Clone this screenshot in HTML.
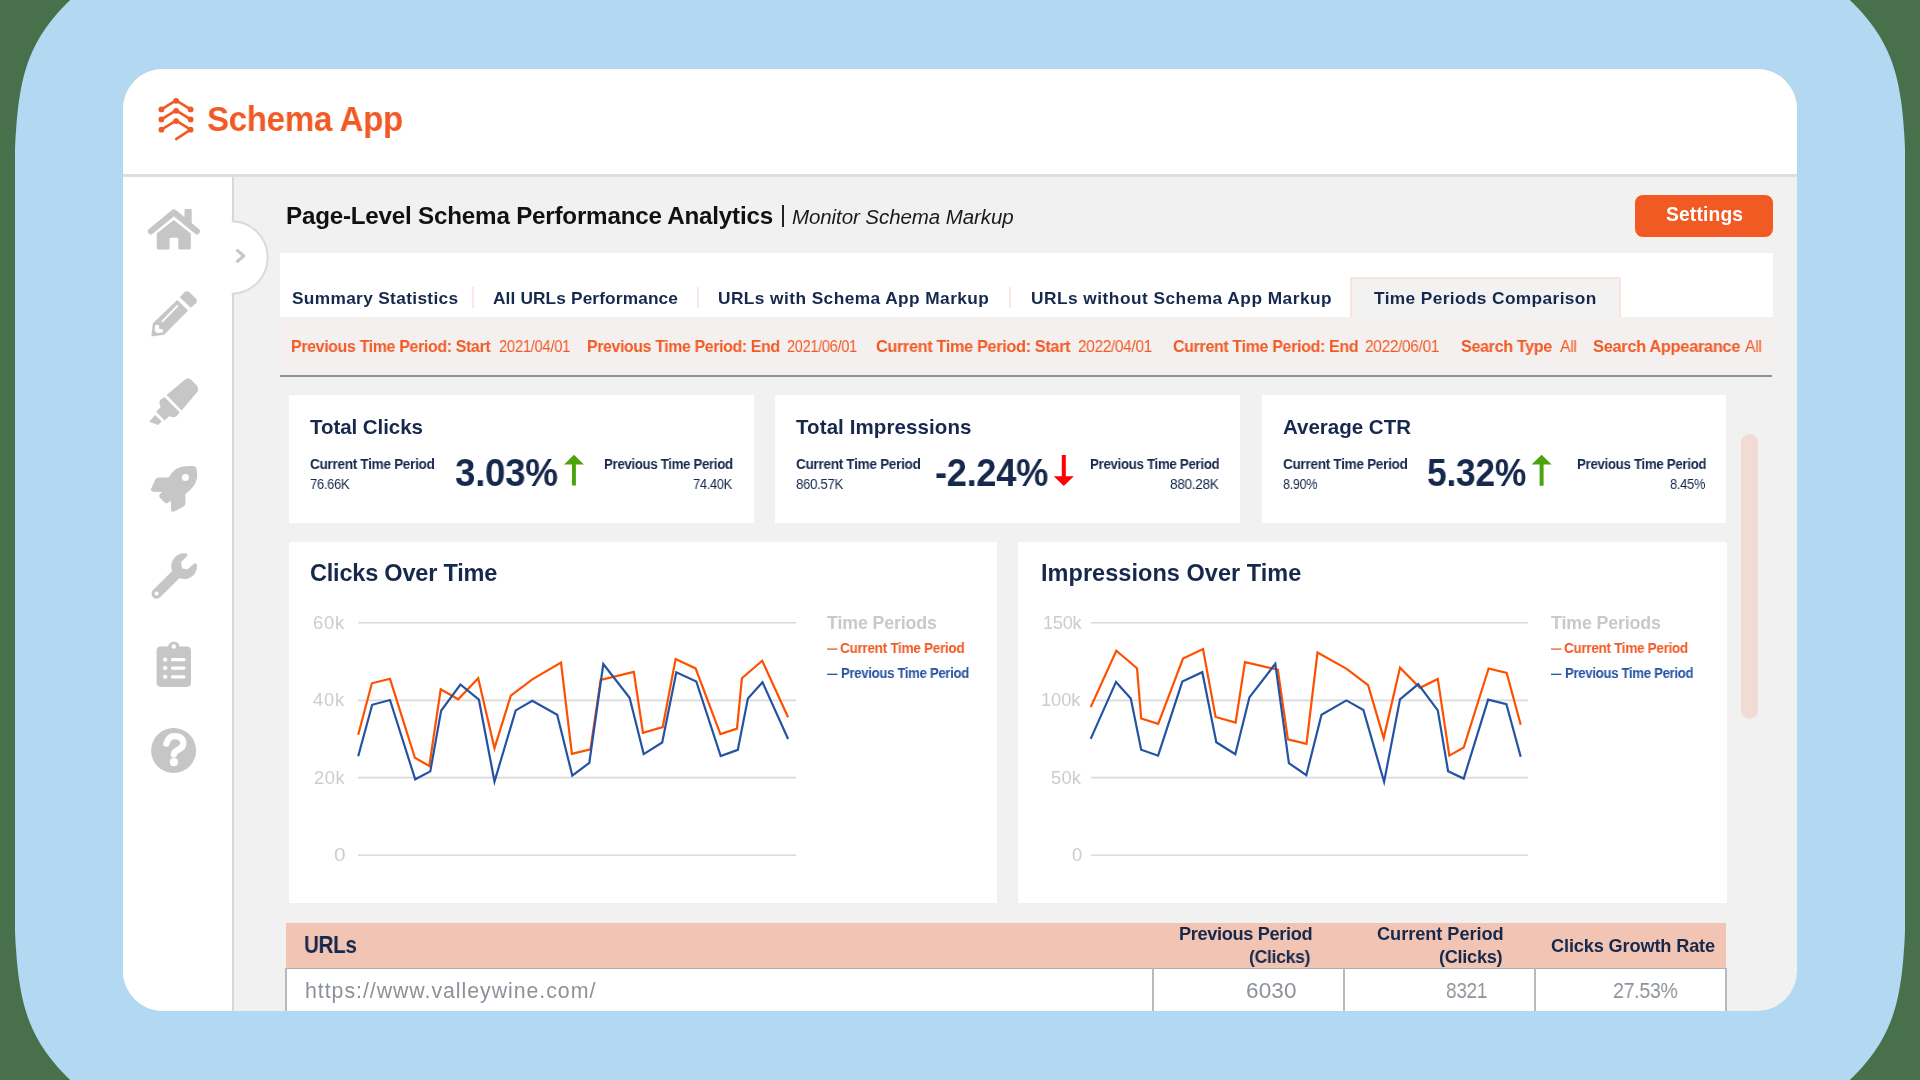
<!DOCTYPE html>
<html><head><meta charset="utf-8"><title>Schema App - Time Periods Comparison</title>
<style>
html,body{margin:0;padding:0;}
body{width:1920px;height:1080px;position:relative;overflow:hidden;background:#48704b;font-family:"Liberation Sans",sans-serif;}
.b{position:absolute;box-sizing:border-box;}
.t{position:absolute;white-space:nowrap;line-height:1;transform-origin:0 0;will-change:transform;}
.ov{position:absolute;left:0;top:0;}
</style></head><body>
<svg class="ov" width="1920" height="1080"><path fill="#b2d8f2" d="M70.2,0 L66.1,4 L62.2,8 L58.5,12 L55.1,16 L51.8,20 L48.7,24 L45.8,28 L43.1,32 L40.5,36 L38.2,40 L36.0,44 L34.0,48 L32.1,52 L30.4,56 L28.8,60 L27.4,64 L26.1,68 L24.9,72 L23.8,76 L22.8,80 L21.9,84 L21.1,88 L20.4,92 L19.7,96 L19.1,100 L18.5,104 L18.0,108 L17.6,112 L17.2,116 L16.8,120 L16.5,124 L16.2,128 L15.9,132 L15.6,136 L15.4,140 L15.2,144 L15.0,148 L15.0,152 L15.0,156 L15.0,160 L15.0,920 L15.0,924 L15.0,928 L15.0,932 L15.2,936 L15.4,940 L15.6,944 L15.9,948 L16.2,952 L16.5,956 L16.8,960 L17.2,964 L17.6,968 L18.0,972 L18.5,976 L19.1,980 L19.7,984 L20.4,988 L21.1,992 L21.9,996 L22.8,1000 L23.8,1004 L24.9,1008 L26.1,1012 L27.4,1016 L28.8,1020 L30.4,1024 L32.1,1028 L34.0,1032 L36.0,1036 L38.2,1040 L40.5,1044 L43.1,1048 L45.8,1052 L48.7,1056 L51.8,1060 L55.1,1064 L58.5,1068 L62.2,1072 L66.1,1076 L70.2,1080 L1849.8,1080 L1853.9,1076 L1857.8,1072 L1861.5,1068 L1864.9,1064 L1868.2,1060 L1871.3,1056 L1874.2,1052 L1876.9,1048 L1879.5,1044 L1881.8,1040 L1884.0,1036 L1886.0,1032 L1887.9,1028 L1889.6,1024 L1891.2,1020 L1892.6,1016 L1893.9,1012 L1895.1,1008 L1896.2,1004 L1897.2,1000 L1898.1,996 L1898.9,992 L1899.6,988 L1900.3,984 L1900.9,980 L1901.5,976 L1902.0,972 L1902.4,968 L1902.8,964 L1903.2,960 L1903.5,956 L1903.8,952 L1904.1,948 L1904.4,944 L1904.6,940 L1904.8,936 L1905.0,932 L1905.0,928 L1905.0,924 L1905.0,920 L1905.0,160 L1905.0,156 L1905.0,152 L1905.0,148 L1904.8,144 L1904.6,140 L1904.4,136 L1904.1,132 L1903.8,128 L1903.5,124 L1903.2,120 L1902.8,116 L1902.4,112 L1902.0,108 L1901.5,104 L1900.9,100 L1900.3,96 L1899.6,92 L1898.9,88 L1898.1,84 L1897.2,80 L1896.2,76 L1895.1,72 L1893.9,68 L1892.6,64 L1891.2,60 L1889.6,56 L1887.9,52 L1886.0,48 L1884.0,44 L1881.8,40 L1879.5,36 L1876.9,32 L1874.2,28 L1871.3,24 L1868.2,20 L1864.9,16 L1861.5,12 L1857.8,8 L1853.9,4 L1849.8,0 Z"/></svg>
<div class="b" style="left:123px;top:69px;width:1674px;height:942px;border-radius:40px;background:#f1f1f1;overflow:hidden">
  <div class="b" style="left:0;top:0;width:1674px;height:105px;background:#fff;border-bottom:3px solid #dcdee0;height:108px"></div>
  <div class="b" style="left:0;top:108px;width:110.5px;height:834px;background:#fff;border-right:2.5px solid #d5d7db"></div>
</div>
<!-- title bar -->
<div class="b" style="left:782px;top:205px;width:2px;height:21.5px;background:#222"></div>
<div class="b" style="left:1635px;top:195px;width:138px;height:41.5px;border-radius:8px;background:#f15a22"></div>
<!-- tabs -->
<div class="b" style="left:280px;top:253px;width:1493px;height:64px;background:#fff"></div>
<div class="b" style="left:1350px;top:277px;width:271px;height:41px;background:#f2f2f2;border:2px solid #f8e5de;border-bottom:none"></div>
<div class="b" style="left:472.2px;top:287px;width:2px;height:21px;background:#fbe8e2"></div>
<div class="b" style="left:696.7px;top:287px;width:2px;height:21px;background:#fbe8e2"></div>
<div class="b" style="left:1009.2px;top:287px;width:2px;height:21px;background:#fbe8e2"></div>
<div class="b" style="left:280px;top:317px;width:1493px;height:58px;background:#f5f0f0"></div>
<div class="b" style="left:280px;top:375px;width:1492px;height:2px;background:#8c939b"></div>
<!-- kpi cards -->
<div class="b" style="left:289px;top:395px;width:465px;height:127.5px;background:#fff"></div>
<div class="b" style="left:775.2px;top:395px;width:464.8px;height:127.5px;background:#fff"></div>
<div class="b" style="left:1262px;top:395px;width:464px;height:127.5px;background:#fff"></div>
<div class="b" style="left:1741px;top:434px;width:17px;height:285px;border-radius:8.5px;background:#f2dbd4"></div>
<!-- charts -->
<div class="b" style="left:288.5px;top:542px;width:708.5px;height:361px;background:#fff"></div>
<div class="b" style="left:1017.5px;top:542px;width:709px;height:361px;background:#fff"></div>
<!-- table -->
<div class="b" style="left:285.5px;top:923px;width:1440.5px;height:45px;background:#f2c4b4"></div>
<div class="b" style="left:285.5px;top:968px;width:1440.5px;height:43px;background:#fff;border-top:1.5px solid #a9aeb3"></div>
<div class="b" style="left:285.2px;top:968px;width:1.7px;height:43px;background:#b6babe"></div>
<div class="b" style="left:1152px;top:968px;width:1.8px;height:43px;background:#b6babe"></div>
<div class="b" style="left:1343px;top:968px;width:1.8px;height:43px;background:#b6babe"></div>
<div class="b" style="left:1534px;top:968px;width:1.8px;height:43px;background:#b6babe"></div>
<div class="b" style="left:1725px;top:968px;width:1.8px;height:43px;background:#b6babe"></div>
<svg class="ov" width="1920" height="1080" viewBox="0 0 1920 1080">
<g stroke="#dadada" stroke-width="1.6"><line x1="358" x2="796" y1="622.8" y2="622.8"/><line x1="1091" x2="1528" y1="622.8" y2="622.8"/><line x1="358" x2="796" y1="700.4" y2="700.4"/><line x1="1091" x2="1528" y1="700.4" y2="700.4"/><line x1="358" x2="796" y1="777.6" y2="777.6"/><line x1="1091" x2="1528" y1="777.6" y2="777.6"/><line x1="358" x2="796" y1="855.2" y2="855.2"/><line x1="1091" x2="1528" y1="855.2" y2="855.2"/></g>
<g fill="none" stroke-width="2.2" stroke-linejoin="miter" stroke-miterlimit="10">
<polyline stroke="#ff5000" points="358.2,734.8 371.9,683.3 390,678.8 414.9,757.8 429.3,766 440.7,689.3 458.2,699.3 478.2,678.2 494.5,748.2 510.8,695.6 532.3,679.3 561,662.6 571.9,753.8 590.4,749.3 600.7,680 633.8,671.9 643,732.9 662.7,727.1 675.6,659 695.6,668.4 720.4,734.1 737,728.6 741.9,678.2 762.2,660.7 788.1,717.3"/><polyline stroke="#2553a3" points="358.2,756.3 372.2,704.8 390,700 415.2,779.3 430.3,771.4 441.1,710.8 460.4,684.5 478.9,699.7 494.5,781.5 515.7,710.4 532.3,700.8 557.2,714.8 572.3,775.6 589.3,763 603.3,664 629.6,697.8 643.7,754.1 662.2,742.5 676.3,672.3 696.3,681.5 720.7,756 737.8,749.9 747.9,698.5 762.5,682.2 788.1,739"/>
<polyline stroke="#ff5000" points="1090.7,707.1 1116.3,650.7 1137,668.2 1141.2,718.5 1158.2,723.8 1183,658.5 1203,649 1215.6,717 1235.6,722.6 1245,662.2 1277.8,669.7 1287.9,739.4 1306.5,743.8 1317.5,652.5 1346.7,668.8 1368.1,685.1 1383.7,738.1 1400,667.8 1420,687.8 1437.8,678.9 1449.3,755.6 1463.7,747.5 1488.6,668.5 1506.7,673 1520.7,724.8"/><polyline stroke="#2553a3" points="1090.7,738.9 1116,681.9 1130.8,698.5 1141.2,749.7 1158.1,755.7 1182.3,681.6 1202.3,672.2 1216.3,742.3 1235.3,754.2 1249.4,697.4 1275.3,663.8 1288.9,763.1 1306.3,775.2 1321.5,714.7 1346.4,700.4 1363.4,710 1384.1,781.9 1400,699.3 1418.2,684.1 1437.8,710.4 1448.1,771.2 1463.7,778.6 1488.1,699.6 1506.4,704.1 1520.7,756.7"/>
</g>
<!-- logo icon -->
<g stroke="#f15a24" stroke-width="2.6" fill="none" stroke-linejoin="round">
<polyline points="161.4,109.4 176.1,100.3 190.6,109.4"/>
<polyline points="161.4,119.4 176.1,110.3 190.6,119.4"/>
<polyline points="161.4,129.7 176.1,120.6 190.6,129.7 175.3,139.7"/>
</g>
<g fill="#f15a24">
<circle cx="161.4" cy="109.4" r="2.9"/><circle cx="190.6" cy="109.4" r="2.9"/><circle cx="176.1" cy="100.8" r="2.9"/>
<circle cx="161.4" cy="119.4" r="2.9"/><circle cx="190.6" cy="119.4" r="2.9"/><circle cx="176.1" cy="110.8" r="2.9"/>
<circle cx="161.4" cy="129.7" r="2.9"/><circle cx="190.6" cy="129.7" r="2.9"/><circle cx="176.1" cy="121.1" r="2.9"/>
</g>
<g stroke-width="1.3"><line x1="827.1" x2="837.5" y1="649.1" y2="649.1" stroke="#f15a24"/><line x1="827.1" x2="837.5" y1="674.3" y2="674.3" stroke="#2553a2"/>
<line x1="1551" x2="1561.4" y1="649.1" y2="649.1" stroke="#f15a24"/><line x1="1551" x2="1561.4" y1="674.3" y2="674.3" stroke="#2553a2"/></g>
<!-- arrows -->
<path fill="#4ca30d" d="M574,454.8 L583.9,464.6 L575.9,464.6 L575.9,485.6 L572,485.6 L572,464.6 L564.1,464.6Z"/>
<path fill="#4ca30d" d="M1541.6,454.8 L1551.6,464.6 L1543.6,464.6 L1543.6,485.8 L1539.6,485.8 L1539.6,464.6 L1531.6,464.6Z"/>
<path fill="#fd0202" d="M1063.8,486 L1073.8,476.2 L1065.8,476.2 L1065.8,455 L1061.8,455 L1061.8,476.2 L1053.8,476.2Z"/>
<!-- sidebar icons -->
<g fill="#c6c6c6">
 <g transform="translate(144,204)">
  <path d="M6.8,27.4 L29.9,8.4 L53,27.4" fill="none" stroke="#c6c6c6" stroke-width="6" stroke-linecap="round" stroke-linejoin="round"/>
  <rect x="40.5" y="5.1" width="7.2" height="16" rx="1"/>
  <path d="M29.9,16 L12.7,29.6 L12.7,44.3 Q12.7,45.6 14.1,45.6 L24.1,45.6 Q25.5,45.6 25.5,44.2 L25.5,35.2 Q25.5,33.8 26.9,33.8 L32.9,33.8 Q34.3,33.8 34.3,35.2 L34.3,44.2 Q34.3,45.6 35.7,45.6 L45.4,45.6 Q46.8,45.6 46.8,44.2 L46.8,29.6 Z"/>
 </g>
 <g transform="translate(144,286)">
  <path d="M35.8,11.2 L40.5,6.3 Q43,4 45.5,6.3 L51.8,12.6 Q54,15 51.8,17.4 L46.7,21.8 Z"/>
  <path fill-rule="evenodd" d="M33.2,14 L44.1,24.6 L20.2,48.8 L7.3,50.6 L8.8,37.3 Z M32.7,20.5 L18.9,34.8 M11.2,38.9 L15,38.9 L15,42.8 L18.9,43.3 L18.9,46.2 L13.2,47.2 L10.6,44.6 Z"/>
  <path d="M33.3,20 L18.4,35.3" stroke="#fff" stroke-width="1.8" stroke-linecap="round"/>
 </g>
 <g transform="translate(144,372)">
  <path d="M22.6,23.1 L40.8,7.8 Q43.6,5.6 46.7,7.3 L53,13.8 Q55,17 53.6,19.5 L37.6,38.4 Z"/>
  <path d="M20.4,25 L35.7,40.3 L32.2,44.6 Q29,46.3 25.5,44 L20.7,48.6 L12.1,39.7 L16.6,35.2 Q14.6,30 16.1,27.9 Z"/>
  <path d="M11.3,43 L17.7,49.4 L14.2,52.9 L5.1,49.7 Z"/>
 </g>
 <g transform="translate(144,460)">
  <path fill-rule="evenodd" d="M24.7,17.5 Q30,8 37.6,6.7 Q44,5.8 49.9,6.2 Q52.4,6.4 52.6,8.8 Q53.5,16 52.9,18 Q52,26 41.4,34.1 L41.4,43.5 Q41,46 38.7,47 L30.1,51.6 Q27.3,52.3 27.1,49.8 L26.9,40.8 L23.6,43 Q21.8,44 20.9,42.7 L16.1,38.1 Q14.6,35.6 15.6,34.4 L18,32 L8.6,31.7 Q6.3,31 7,29 L11.5,19.3 Q12.6,17.6 14.5,17.5 Z M44.9,17.5 A3.5,3.5 0 1 0 37.9,17.5 A3.5,3.5 0 1 0 44.9,17.5 Z"/>
 </g>
 <g transform="translate(144,548)">
  <path d="M12.6,45.6 L32,26.4" stroke="#c6c6c6" stroke-width="10.2" stroke-linecap="round"/>
  <path fill-rule="evenodd" d="M43,5.6 A12.9,12.9 0 1 0 52.9,16.5 L50.8,15 L43.8,21.2 L38.1,20.4 L37,14.2 L43.6,7.5 Z"/>
  <circle cx="12.6" cy="45.6" r="2.1" fill="#fff"/>
 </g>
 <g transform="translate(144,634)">
  <path fill-rule="evenodd" d="M16.9,12.6 L24,12.6 A5.9,5.9 0 0 1 35.6,12.6 L42.7,12.6 Q47,12.6 47,16.9 L47,48.6 Q47,52.9 42.7,52.9 L16.9,52.9 Q12.6,52.9 12.6,48.6 L12.6,16.9 Q12.6,12.6 16.9,12.6 Z M32.05,12.6 A2.25,2.25 0 1 0 27.55,12.6 A2.25,2.25 0 1 0 32.05,12.6 Z"/>
  <g fill="#fff"><circle cx="21.2" cy="25.7" r="2.15"/><circle cx="21.2" cy="34.1" r="2.15"/><circle cx="21.2" cy="42.8" r="2.15"/></g>
  <g stroke="#fff" stroke-width="3.2" stroke-linecap="round"><line x1="28.4" x2="39.9" y1="25.7" y2="25.7"/><line x1="28.4" x2="39.9" y1="34.1" y2="34.1"/><line x1="28.4" x2="39.9" y1="42.8" y2="42.8"/></g>
 </g>
 <circle cx="173.6" cy="750.5" r="22.5"/>
 <path d="M166.3,743.6 Q169,736.2 174.2,736.2 Q183.3,736.4 183.3,743.4 Q183.3,747.2 178.4,749.6 Q173.8,751.8 173.8,754.6" fill="none" stroke="#fff" stroke-width="6.3" stroke-linecap="round" stroke-linejoin="round"/>
 <circle cx="173.9" cy="762.2" r="4.1" fill="#fff"/>
</g>
<!-- toggle -->
<path d="M230.6,221.3 A36.2,36.2 0 0 1 230.6,293.7 Z" fill="#fff" stroke="none"/><path d="M231.5,221.3 A36.2,36.2 0 0 1 231.5,293.7" fill="none" stroke="#d8dbde" stroke-width="2"/>
<polyline points="237.6,250.6 243.8,255.9 237.6,261.2" fill="none" stroke="#c6c6c6" stroke-width="3.2" stroke-linecap="round" stroke-linejoin="round"/>
</svg>
<div class="t" style="left:207.18px;top:101.80px;font-size:35.8px;color:#f15a24;font-weight:bold;letter-spacing:-0.350px;transform:scaleX(0.9237);">Schema App</div>
<div class="t" style="left:285.90px;top:204.01px;font-size:24.2px;color:#111111;font-weight:bold;letter-spacing:-0.211px;">Page-Level Schema Performance Analytics</div>
<div class="t" style="left:791.80px;top:207.15px;font-size:20.5px;color:#1a1a1a;font-style:italic;letter-spacing:-0.085px;">Monitor Schema Markup</div>
<div class="t" style="left:1665.90px;top:205.16px;font-size:19.3px;color:#ffffff;font-weight:bold;letter-spacing:0.137px;">Settings</div>
<div class="t" style="left:291.80px;top:289.96px;font-size:17.3px;color:#16294d;font-weight:bold;letter-spacing:0.336px;">Summary Statistics</div>
<div class="t" style="left:492.50px;top:289.96px;font-size:17.3px;color:#16294d;font-weight:bold;letter-spacing:0.129px;">All URLs Performance</div>
<div class="t" style="left:718.30px;top:289.96px;font-size:17.3px;color:#16294d;font-weight:bold;letter-spacing:0.436px;">URLs with Schema App Markup</div>
<div class="t" style="left:1031.00px;top:289.96px;font-size:17.3px;color:#16294d;font-weight:bold;letter-spacing:0.489px;">URLs without Schema App Markup</div>
<div class="t" style="left:1374.00px;top:289.96px;font-size:17.3px;color:#16294d;font-weight:bold;letter-spacing:0.388px;">Time Periods Comparison</div>
<div class="t" style="left:291.34px;top:338.13px;font-size:16.5px;color:#f15a24;font-weight:bold;letter-spacing:-0.350px;transform:scaleX(0.9646);">Previous Time Period: Start</div>
<div class="t" style="left:499.00px;top:338.13px;font-size:16.5px;color:#f15a24;letter-spacing:-0.350px;transform:scaleX(0.8984);">2021/04/01</div>
<div class="t" style="left:587.24px;top:338.13px;font-size:16.5px;color:#f15a24;font-weight:bold;letter-spacing:-0.350px;transform:scaleX(0.9589);">Previous Time Period: End</div>
<div class="t" style="left:787.00px;top:338.13px;font-size:16.5px;color:#f15a24;letter-spacing:-0.350px;transform:scaleX(0.8832);">2021/06/01</div>
<div class="t" style="left:876.00px;top:338.13px;font-size:16.5px;color:#f15a24;font-weight:bold;letter-spacing:-0.350px;transform:scaleX(0.9861);">Current Time Period: Start</div>
<div class="t" style="left:1078.00px;top:338.13px;font-size:16.5px;color:#f15a24;letter-spacing:-0.350px;transform:scaleX(0.9337);">2022/04/01</div>
<div class="t" style="left:1173.00px;top:338.13px;font-size:16.5px;color:#f15a24;font-weight:bold;letter-spacing:-0.350px;transform:scaleX(0.9689);">Current Time Period: End</div>
<div class="t" style="left:1365.40px;top:338.13px;font-size:16.5px;color:#f15a24;letter-spacing:-0.350px;transform:scaleX(0.9362);">2022/06/01</div>
<div class="t" style="left:1461.00px;top:338.13px;font-size:16.5px;color:#f15a24;font-weight:bold;letter-spacing:-0.350px;transform:scaleX(0.9761);">Search Type</div>
<div class="t" style="left:1559.60px;top:338.13px;font-size:16.5px;color:#f15a24;letter-spacing:-0.350px;transform:scaleX(0.9546);">All</div>
<div class="t" style="left:1593.00px;top:338.13px;font-size:16.5px;color:#f15a24;font-weight:bold;letter-spacing:-0.350px;transform:scaleX(0.9966);">Search Appearance</div>
<div class="t" style="left:1744.60px;top:338.13px;font-size:16.5px;color:#f15a24;letter-spacing:-0.350px;transform:scaleX(0.9546);">All</div>
<div class="t" style="left:310.00px;top:417.00px;font-size:20.5px;color:#16294d;font-weight:bold;letter-spacing:-0.058px;">Total Clicks</div>
<div class="t" style="left:310.00px;top:457.40px;font-size:14.3px;color:#16294d;font-weight:bold;letter-spacing:-0.350px;transform:scaleX(0.9536);">Current Time Period</div>
<div class="t" style="left:310.00px;top:477.46px;font-size:14.1px;color:#16294d;letter-spacing:-0.350px;transform:scaleX(0.9237);">76.66K</div>
<div class="t" style="left:454.90px;top:454.44px;font-size:38.7px;color:#16294d;font-weight:bold;letter-spacing:-0.350px;transform:scaleX(0.9500);">3.03%</div>
<div class="t" style="left:604.20px;top:457.40px;font-size:14.3px;color:#16294d;font-weight:bold;letter-spacing:-0.350px;transform:scaleX(0.9267);">Previous Time Period</div>
<div class="t" style="left:692.80px;top:477.46px;font-size:14.1px;color:#16294d;letter-spacing:-0.350px;transform:scaleX(0.9145);">74.40K</div>
<div class="t" style="left:796.00px;top:417.00px;font-size:20.5px;color:#16294d;font-weight:bold;letter-spacing:0.093px;">Total Impressions</div>
<div class="t" style="left:796.00px;top:457.40px;font-size:14.3px;color:#16294d;font-weight:bold;letter-spacing:-0.350px;transform:scaleX(0.9536);">Current Time Period</div>
<div class="t" style="left:796.00px;top:477.46px;font-size:14.1px;color:#16294d;letter-spacing:-0.350px;transform:scaleX(0.9391);">860.57K</div>
<div class="t" style="left:934.86px;top:454.44px;font-size:38.7px;color:#16294d;font-weight:bold;letter-spacing:-0.350px;transform:scaleX(0.9378);">-2.24%</div>
<div class="t" style="left:1090.00px;top:457.40px;font-size:14.3px;color:#16294d;font-weight:bold;letter-spacing:-0.350px;transform:scaleX(0.9311);">Previous Time Period</div>
<div class="t" style="left:1169.60px;top:477.46px;font-size:14.1px;color:#16294d;letter-spacing:-0.350px;transform:scaleX(0.9685);">880.28K</div>
<div class="t" style="left:1282.60px;top:417.00px;font-size:20.5px;color:#16294d;font-weight:bold;">Average CTR</div>
<div class="t" style="left:1282.60px;top:457.40px;font-size:14.3px;color:#16294d;font-weight:bold;letter-spacing:-0.350px;transform:scaleX(0.9536);">Current Time Period</div>
<div class="t" style="left:1282.60px;top:477.46px;font-size:14.1px;color:#16294d;letter-spacing:-0.350px;transform:scaleX(0.8967);">8.90%</div>
<div class="t" style="left:1427.08px;top:454.44px;font-size:38.7px;color:#16294d;font-weight:bold;letter-spacing:-0.350px;transform:scaleX(0.9168);">5.32%</div>
<div class="t" style="left:1576.60px;top:457.40px;font-size:14.3px;color:#16294d;font-weight:bold;letter-spacing:-0.350px;transform:scaleX(0.9303);">Previous Time Period</div>
<div class="t" style="left:1669.60px;top:477.46px;font-size:14.1px;color:#16294d;letter-spacing:-0.350px;transform:scaleX(0.9198);">8.45%</div>
<div class="t" style="left:310.30px;top:561.71px;font-size:23.5px;color:#16294d;font-weight:bold;letter-spacing:-0.201px;">Clicks Over Time</div>
<div class="t" style="left:1041.30px;top:561.71px;font-size:23.5px;color:#16294d;font-weight:bold;letter-spacing:0.044px;">Impressions Over Time</div>
<div class="t" style="left:313.40px;top:613.86px;font-size:18.3px;color:#cccccc;letter-spacing:0.783px;">60k</div>
<div class="t" style="left:313.40px;top:691.46px;font-size:18.3px;color:#cccccc;letter-spacing:0.783px;">40k</div>
<div class="t" style="left:313.90px;top:768.66px;font-size:18.3px;color:#cccccc;letter-spacing:0.533px;">20k</div>
<div class="t" style="left:334.00px;top:846.26px;font-size:18.3px;color:#cccccc;transform:scaleX(1.1300);">0</div>
<div class="t" style="left:1042.51px;top:613.86px;font-size:18.3px;color:#cccccc;letter-spacing:-0.350px;transform:scaleX(0.9883);">150k</div>
<div class="t" style="left:1041.30px;top:691.46px;font-size:18.3px;color:#cccccc;letter-spacing:-0.100px;">100k</div>
<div class="t" style="left:1050.70px;top:768.66px;font-size:18.3px;color:#cccccc;letter-spacing:0.233px;">50k</div>
<div class="t" style="left:1071.60px;top:846.26px;font-size:18.3px;color:#cccccc;transform:scaleX(0.9900);">0</div>
<div class="t" style="left:827.10px;top:614.93px;font-size:17.8px;color:#c9c9c9;font-weight:bold;letter-spacing:-0.132px;">Time Periods</div>
<div class="t" style="left:840.10px;top:641.05px;font-size:14px;color:#f15a24;font-weight:bold;letter-spacing:-0.350px;transform:scaleX(0.9735);">Current Time Period</div>
<div class="t" style="left:840.60px;top:665.75px;font-size:14px;color:#2553a2;font-weight:bold;letter-spacing:-0.350px;transform:scaleX(0.9410);">Previous Time Period</div>
<div class="t" style="left:1551.00px;top:614.93px;font-size:17.8px;color:#c9c9c9;font-weight:bold;letter-spacing:-0.132px;">Time Periods</div>
<div class="t" style="left:1564.00px;top:641.05px;font-size:14px;color:#f15a24;font-weight:bold;letter-spacing:-0.350px;transform:scaleX(0.9696);">Current Time Period</div>
<div class="t" style="left:1564.50px;top:665.75px;font-size:14px;color:#2553a2;font-weight:bold;letter-spacing:-0.350px;transform:scaleX(0.9432);">Previous Time Period</div>
<div class="t" style="left:303.50px;top:934.13px;font-size:23px;color:#16294d;font-weight:bold;letter-spacing:-0.350px;transform:scaleX(0.8966);">URLs</div>
<div class="t" style="left:1178.80px;top:924.99px;font-size:18.2px;color:#16294d;font-weight:bold;letter-spacing:-0.350px;">Previous Period</div>
<div class="t" style="left:1249.30px;top:947.79px;font-size:18.2px;color:#16294d;font-weight:bold;letter-spacing:-0.350px;transform:scaleX(0.9701);">(Clicks)</div>
<div class="t" style="left:1376.90px;top:924.99px;font-size:18.2px;color:#16294d;font-weight:bold;letter-spacing:-0.048px;">Current Period</div>
<div class="t" style="left:1439.00px;top:947.79px;font-size:18.2px;color:#16294d;font-weight:bold;letter-spacing:-0.306px;">(Clicks)</div>
<div class="t" style="left:1551.00px;top:936.79px;font-size:18.2px;color:#16294d;font-weight:bold;letter-spacing:-0.156px;">Clicks Growth Rate</div>
<div class="t" style="left:304.60px;top:981.32px;font-size:21.3px;color:#8b929a;letter-spacing:0.969px;">https://www.valleywine.com/</div>
<div class="t" style="left:1246.00px;top:980.25px;font-size:22.5px;color:#8b929a;letter-spacing:0.120px;">6030</div>
<div class="t" style="left:1446.00px;top:980.25px;font-size:22.5px;color:#8b929a;letter-spacing:-0.350px;transform:scaleX(0.8455);">8321</div>
<div class="t" style="left:1613.13px;top:980.25px;font-size:22.5px;color:#8b929a;letter-spacing:-0.350px;transform:scaleX(0.8701);">27.53%</div>
</body></html>
